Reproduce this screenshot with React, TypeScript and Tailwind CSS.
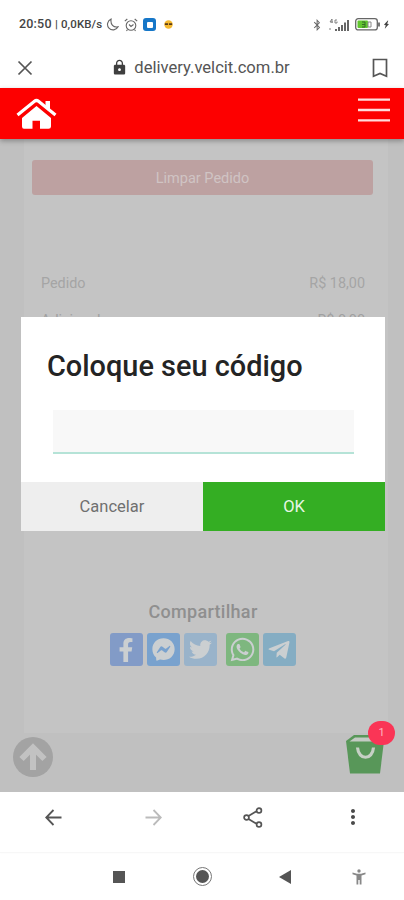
import {
  FaBluetoothB,
  FaFacebookF,
  FaFacebookMessenger,
  FaTelegramPlane,
  FaTwitter,
  FaWhatsapp,
} from 'react-icons/fa'
import { MdBolt, MdLock, MdMoreVert } from 'react-icons/md'

function StatusBar() {
  return (
    <div className="flex h-12 items-center justify-between pl-[19px] pr-[12px] pt-[1px] text-[#444]">
      <div className="flex items-center">
        <span className="w-[84px] whitespace-nowrap text-[12.5px] font-medium tracking-[0.2px]">
          20:50 <span className="text-[11.5px] tracking-[0.1px]">| 0,0KB/s</span>
        </span>
        <svg viewBox="0 0 14 14" className="ml-[3px] size-[13px]" fill="none" stroke="#666" strokeWidth="1.2">
          <path d="M5.5 1.2A6 6 0 1 0 13 9.5C8 10.5 4.5 7 5.5 1.2Z" />
        </svg>
        <svg viewBox="0 0 14 14" className="ml-[5px] size-[14px]" fill="none" stroke="#666" strokeWidth="1.1">
          <circle cx="7" cy="7.5" r="4.8" />
          <path d="M.8 3.2 3.3 1M13.2 3.2 10.7 1M5 6.5l2 2 2.5-2M3.5 11.5l-1 1.5M10.5 11.5l1 1.5" />
        </svg>
        <span className="ml-[5px] flex size-[13px] items-center justify-center rounded-[3px] bg-[#1677c8]">
          <span className="size-[6px] rounded-[1px] bg-white" />
        </span>
        <svg viewBox="0 0 10 10" className="ml-2 size-[9px]">
          <circle cx="5" cy="5" r="4.7" fill="#f5b82e" />
          <path d="M1 3.6h3.5v2H1zM5.5 3.6H9v2H5.5z" fill="#593b16" />
        </svg>
      </div>
      <div className="flex items-center">
        <FaBluetoothB className="size-[12px] text-[#666]" />
        <svg viewBox="0 0 20 14" className="ml-[6px] h-[14px] w-5" fill="#666">
          <path d="M6 11h2v2H6zM9 9h2v4H9zM12 7h2v6h-2zM15 4.5h2V13h-2zM18 2h2v11h-2z" />
          <path d="M3 1 1 4h3M3 1v4M8 2H6v3h2V3.5M1 10v2" fill="none" stroke="#777" strokeWidth=".9" />
        </svg>
        <svg viewBox="0 0 26 13" className="ml-[6px] h-[13px] w-[26px]">
          <rect x=".7" y=".7" width="21.6" height="11.2" rx="2.5" fill="#fff" stroke="#666" strokeWidth="1.3" />
          <rect x="2.5" y="2.5" width="10.5" height="7.6" rx="1" fill="#61c62f" />
          <path d="M7 4h3v5H7M10 6.5H7" fill="none" stroke="#356b28" />
          <path d="M13 4h3v5h-3z" fill="none" stroke="#888" />
          <path d="M23 4.5h2v4h-2z" fill="#777" />
        </svg>
        <MdBolt className="size-[11px] rotate-12" />
      </div>
    </div>
  )
}

function AddressBar() {
  return (
    <div className="flex h-10 items-center justify-between pb-[1px] pl-[17px] pr-[16px]">
      <svg viewBox="0 0 16 16" className="size-4" stroke="#555" strokeWidth="1.7">
        <path d="m1.5 1.5 13 13M14.5 1.5l-13 13" />
      </svg>
      <div className="mr-[4px] flex items-center text-[#555]">
        <MdLock className="size-[17px] text-[#3f3f3f]" />
        <span className="ml-[6px] text-[16.6px] leading-5">delivery.velcit.com.br</span>
      </div>
      <svg viewBox="0 0 16 20" className="h-5 w-4" fill="none" stroke="#555" strokeWidth="1.7">
        <path d="M1.5 1.5h13v16.7L8 15.5l-6.5 2.7z" />
      </svg>
    </div>
  )
}

function Header() {
  return (
    <header className="relative z-10 flex h-[51px] items-start justify-between bg-[#fd0000] pl-4 pr-[14px] shadow-[0_2px_5px_rgba(0,0,0,0.3)]">
      <svg viewBox="0 0 41 32" className="mt-[10px] h-8 w-[41px]" fill="#fff">
        <path d="M20.5 8 6 20v8.5q0 2.3 2 2.3h8.5v-8H24v8h8.5q2.500 0 2.500-2.300V20z" />
        <path d="M1.5 17 18.5 3.3q2-1.600 4 0L39.500 17" fill="none" stroke="#fff" strokeWidth="3.2" />
        <path d="M29.5 3H34v9.5l-4.500-4z" />
      </svg>
      <svg viewBox="0 0 32 26" className="mt-[9px] h-[26px] w-8" stroke="#ffdcdc" strokeWidth="2.3">
        <path d="M0 2.7h32M0 13h32M0 23.4h32" />
      </svg>
    </header>
  )
}

function Share() {
  const tile = 'flex size-[33px] items-center justify-center rounded-[3px] text-[#cbcfd1]'

  return (
    <div className="flex flex-col items-center">
      <h2 className="text-[18px] font-medium leading-6 tracking-[0.3px] text-[#8f8f8f]">Compartilhar</h2>
      <div className="mr-[1px] mt-[9px] flex">
        <span className={`${tile} bg-[#829bc7]`}>
          <FaFacebookF className="size-6" />
        </span>
        <span className={`${tile} ml-1 bg-[#79a2ce]`}>
          <FaFacebookMessenger className="size-[23px]" />
        </span>
        <span className={`${tile} ml-1 bg-[#99b3ca]`}>
          <FaTwitter className="size-[23px]" />
        </span>
        <span className={`${tile} ml-[9px] bg-[#7eb77f]`}>
          <FaWhatsapp className="size-[27px]" />
        </span>
        <span className={`${tile} ml-1 bg-[#85adc3]`}>
          <FaTelegramPlane className="size-6" />
        </span>
      </div>
    </div>
  )
}

function CodeDialog() {
  return (
    <div role="dialog" className="absolute left-[21px] top-[178px] flex h-[214px] w-[364px] flex-col bg-white">
      <h1 className="ml-[26px] mt-[31px] text-[28.9px] font-medium leading-9 text-[#242424]">
        Coloque seu código
      </h1>
      <input className="ml-[32px] mt-[26px] h-[44px] w-[301px] border-b-2 border-[#b5e3d7] bg-[#f8f8f8] outline-none" />
      <div className="mt-auto grid h-[49px] grid-cols-2 text-[16.5px]">
        <button className="bg-[#eee] pt-[1px] text-[#707070]">Cancelar</button>
        <button className="bg-[#34ae23] pt-[1px] text-[#e8f6e5]">OK</button>
      </div>
    </div>
  )
}

export default function App() {
  return (
    <div className="flex h-[900px] w-[404px] flex-col overflow-hidden bg-white font-[Roboto,sans-serif]">
      <StatusBar />
      <AddressBar />
      <Header />

      <main className="relative h-[653px] bg-[#c0c0c0]">
        <div className="ml-6 flex h-[594px] w-[364px] flex-col bg-[#c4c4c4] pt-[21px]">
          <button className="ml-2 h-[35px] w-[341px] rounded-[3px] bg-[#bda1a1] pt-[2px] text-[14.5px] text-[#d0c4c4]">
            Limpar Pedido
          </button>
          <div className="ml-[17px] mt-[79px] flex w-[324px] justify-between text-[14.4px] leading-5 text-[#a5a5a5]">
            <span>Pedido</span>
            <span>R$ 18,00</span>
          </div>
          <div className="ml-[17px] mt-[17px] flex w-[324px] justify-between text-[14.4px] leading-5 text-[#a0a0a0]">
            <span>Adicional</span>
            <span>R$ 0,00</span>
          </div>
          <div className="mt-auto mb-[67px] -ml-[6px]">
            <Share />
          </div>
        </div>

        <button className="absolute left-[13px] top-[598px] size-10 rounded-full bg-[#a3a3a3]">
          <svg viewBox="0 0 40 40" fill="none" stroke="#c2c2c2" strokeWidth="6">
            <path d="M20 33V11M8.5 22 20 10.5 31.5 22" />
          </svg>
        </button>
        <button className="absolute left-[345px] top-[594px] h-[42px] w-[41px]">
          <svg viewBox="0 0 41 42" className="h-[42px] w-[41px]">
            <path d="M1 8 9 2h24l6 6-4 32.5H5z" fill="#589759" />
            <path d="M4.5 8.5 10 4.5h24v4z" fill="#c4cbc4" />
            <path d="M12.5 14.5c1 13 15 13 16 0" fill="none" stroke="#c6d0c5" strokeWidth="3.2" />
          </svg>
        </button>
        <span className="absolute left-[368px] top-[582px] flex h-6 w-[27px] items-center justify-center rounded-full bg-[#fa3556] text-[11px] text-[#ffb9c2]">
          1
        </span>

        <CodeDialog />
      </main>

      <nav className="grid h-[61px] grid-cols-4 items-center justify-items-center border-b border-[#f7f7f7] pb-[10px] pl-[3px] pr-[1px] shadow-[0_-1px_2px_rgba(0,0,0,0.15)]">
        <svg viewBox="0 0 17 17" className="size-[17px]" fill="none" stroke="#555" strokeWidth="1.8">
          <path d="M16.5 8.5h-15M8.5 1 1.2 8.5 8.5 16" />
        </svg>
        <svg viewBox="0 0 17 17" className="size-[17px]" fill="none" stroke="#bbb" strokeWidth="1.8">
          <path d="M.5 8.5h15M8.5 1l7.3 7.5L8.5 16" />
        </svg>
        <svg viewBox="0 0 20 21" className="h-[21px] w-5" fill="none" stroke="#555" strokeWidth="1.7">
          <path d="m5.5 9 8.5-5M5.5 12l8.5 5" />
          <circle cx="3.5" cy="10.5" r="2.4" />
          <circle cx="16" cy="3.5" r="2.4" />
          <circle cx="16" cy="17.5" r="2.4" />
        </svg>
        <MdMoreVert className="size-6 text-[#4a4a4a]" />
      </nav>

      <div className="flex h-[47px] items-center pl-[113px]">
        <span className="size-3 bg-[#555]" />
        <span className="ml-[68px] flex size-[19px] items-center justify-center rounded-full border-[1.5px] border-[#777]">
          <span className="size-[13px] rounded-full bg-[#555]" />
        </span>
        <svg viewBox="0 0 12 14" className="ml-[67px] h-[14px] w-3" fill="#555">
          <path d="M12 0v14L0 7z" />
        </svg>
        <svg viewBox="0 0 14 16" className="ml-[61px] h-4 w-[14px]" fill="#888">
          <circle cx="7" cy="2" r="1.7" />
          <path d="M.5 3.5 5 4.7h4l4.5-1.2v1.7L9.5 6.5v9H7.7V11H6.3v4.5H4.5v-9l-4-1.3z" />
        </svg>
      </div>
    </div>
  )
}
